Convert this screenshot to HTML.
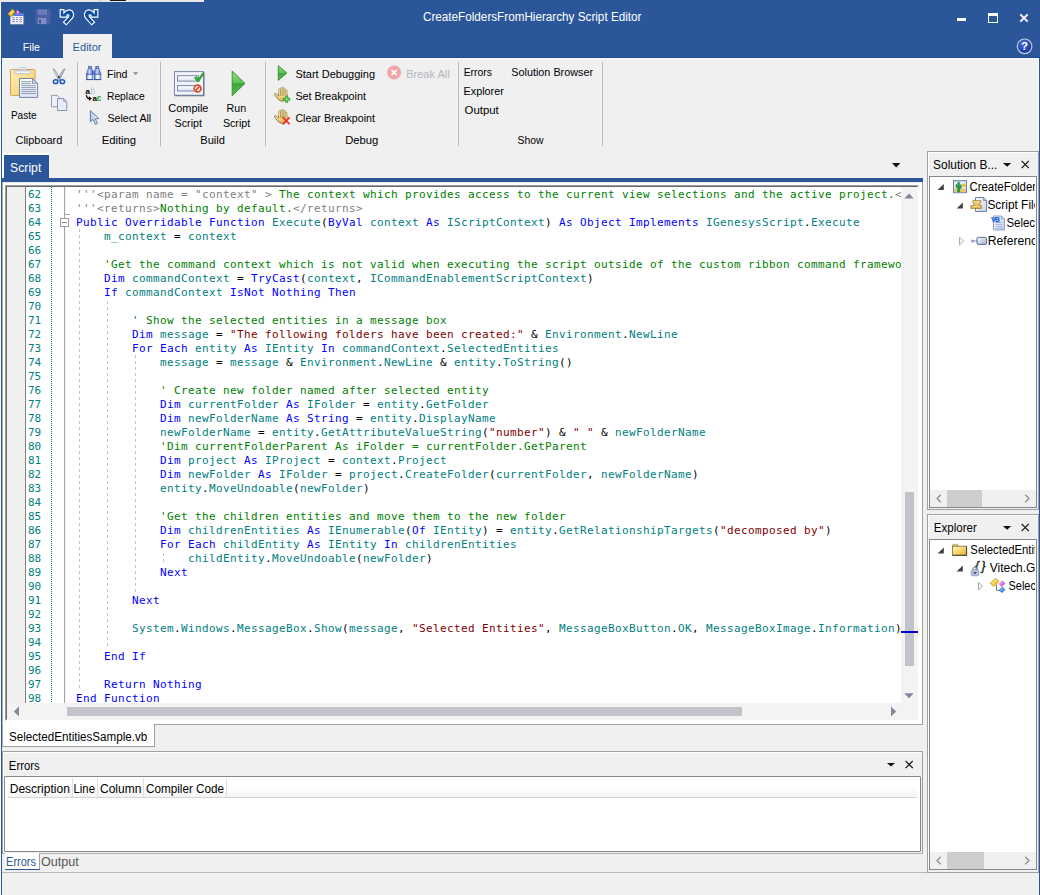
<!DOCTYPE html>
<html lang="en">
<head>
<meta charset="utf-8">
<title>CreateFoldersFromHierarchy Script Editor</title>
<style>
html,body{margin:0;padding:0}
body{width:1040px;height:895px;overflow:hidden;position:relative;background:#f0f0f0;font-family:"Liberation Sans",sans-serif;font-size:12px;color:#000;line-height:14px}
.a{position:absolute}
.t{position:absolute;white-space:nowrap;line-height:14px;height:14px}
svg{position:absolute;overflow:visible}
#topstrip{left:0;top:0;width:204px;height:2px;background:#e8e8e8}
#leftstrip{left:0;top:2px;width:1px;height:893px;background:#fafafa}
#bl{left:1px;top:2px;width:1px;height:893px;background:#2b579a}
#br{left:1039px;top:2px;width:1px;height:893px;background:#2b579a}
#title{left:1px;top:0;width:1039px;height:58px;background:#2b579a}
#ribbon{left:2px;top:58px;width:1036px;height:93px;background:#f0f0f0;border-right:1px solid #fbfaf6}
.sep{position:absolute;width:3px;margin-left:-1px;background:linear-gradient(to right,#f5f5f5 0,#f5f5f5 1px,#b6b6b6 1px,#b6b6b6 2px,#f5f5f5 2px,#f5f5f5 3px);top:62px;height:84px}
.tabsel{left:63px;top:34px;width:49px;height:24px;background:#f0f0f0}
/* code */
#code{left:66px;top:187px;width:835px;height:516px;overflow:hidden;background:#fff;box-sizing:border-box;padding-top:1px}
#code .ln,#nums .ln{height:14px;line-height:14px;white-space:pre;font-family:"DejaVu Sans Mono","Liberation Mono",monospace;font-size:11px;letter-spacing:0.377px}
#code .ln{padding-left:10px;color:#000}
#nums{left:26px;top:187px;width:38px;height:516px;overflow:hidden;background:#fff;color:#008080;box-sizing:border-box;padding-top:1px}
#nums .ln{padding-left:2px;letter-spacing:0}
.k{color:#00f}.i{color:#008080}.c{color:#008000}.s{color:#800000}.x{color:#808080}
.guide{position:absolute;width:1px;background-image:linear-gradient(to bottom,#c6c6c6 0,#c6c6c6 3px,transparent 3px,transparent 6px);background-size:1px 6px;background-repeat:repeat-y}
</style>
</head>
<body>
<div class="a" id="title"></div>
<div class="a" id="topstrip"></div>
<div class="a" id="leftstrip"></div>
<div class="a" id="ribbon"></div>
<div class="a" id="bl"></div>
<div class="a" id="br"></div>
<!-- ===== title bar / quick access ===== -->
<div class="a" id="topblk" style="left:110px;top:0;width:16px;height:1px;background:#1a1a1a"></div>
<div class="a" style="left:99px;top:0;width:1px;height:2px;background:#c8c8c8"></div>
<svg class="a" style="left:0;top:0" width="110" height="34" viewBox="0 0 110 34">
  <!-- app icon -->
  <rect x="10.4" y="15.6" width="13.2" height="8.6" fill="#f5f5f7"/>
  <path d="M10.4 24.4 H23.8 V16" fill="none" stroke="#7d879c" stroke-width="0.7"/>
  <rect x="14.2" y="13" width="9.6" height="2.9" fill="#3d70de"/>
  <rect x="14.4" y="13.9" width="9.2" height="0.9" fill="#6a97f0"/>
  <g fill="#7f8fbe"><rect x="12.1" y="17.1" width="2.9" height="1"/><rect x="16" y="17.1" width="2" height="1"/><rect x="19.1" y="17.1" width="2.9" height="1"/>
  <rect x="12.1" y="19.1" width="2.9" height="1"/><rect x="16" y="19.1" width="2" height="1"/><rect x="19.1" y="19.1" width="2.9" height="1"/>
  <rect x="12.1" y="21.1" width="2.9" height="1"/><rect x="16" y="21.1" width="2" height="1"/><rect x="19.1" y="21.1" width="2.9" height="1"/></g>
  <path d="M8 13.7 L12.6 9 L15.1 11.7 L11 17 Z" fill="#f3c01c" stroke="#d29a08" stroke-width="0.4"/>
  <path d="M9.7 13.4 L12.6 10.5 L13.6 11.6 L10.8 14.7 Z" fill="#f6e08e"/>
  <path d="M9.2 15.2 L11 17 L15.1 11.7 L14.6 11.2 L10.9 15.9 Z" fill="#c98f06"/>
  <path d="M16.1 11.4 L17.5 10.1 L19.8 12.7 L18.4 15.8 L17.2 14.2 Z" fill="#ee6de6"/>
  <path d="M16.6 11.5 L17.5 10.7 L19 12.5 L18 13.4 Z" fill="#ffa6fb"/>
  <path d="M18 13.6 L19.6 12.8 L18.4 15.6 L17.5 14.3 Z" fill="#c93cc0"/>
  <!-- save (disabled) -->
  <path d="M35.5 9 H50.5 V24.5 H37 L35.5 23 Z" fill="#4b5fa6"/>
  <rect x="38" y="9.6" width="9" height="5.2" fill="#7286be"/>
  <rect x="39" y="11" width="7" height="0.8" fill="#5a70b0"/><rect x="39" y="12.8" width="7" height="0.8" fill="#5a70b0"/>
  <rect x="38" y="18" width="8.4" height="6" fill="#7c90c4"/>
  <rect x="39.2" y="19.8" width="1.6" height="3.6" fill="#2f3f96"/>
  <!-- undo -->
  <path d="M60.2 9.6 H63.9 V13 L65.6 11.2 Q69.4 8.4 72.4 11.2 Q74.6 14.6 72.6 18 L66.3 24.8 L63.5 22.2 L68.7 16.6 Q69.4 15 68.2 14.8 L67 15 V17.1 H60.2 Z" fill="#0c4da2" stroke="#fff" stroke-width="1.15" stroke-linejoin="miter"/>
  <!-- redo -->
  <path d="M97.8 9.6 H94.1 V13 L92.4 11.2 Q88.6 8.4 85.6 11.2 Q83.4 14.6 85.4 18 L91.7 24.8 L94.5 22.2 L89.3 16.6 Q88.6 15 89.8 14.8 L91 15 V17.1 H97.8 Z" fill="#0c4da2" stroke="#fff" stroke-width="1.15" stroke-linejoin="miter"/>
</svg>
<!-- window buttons -->
<div class="a" style="left:957px;top:18px;width:9px;height:3px;background:#fff"></div>
<div class="a" style="left:988px;top:13px;width:8px;height:6px;border:1px solid #fff;border-top:3px solid #fff"></div>
<svg class="a" style="left:1019px;top:13px" width="10" height="10" viewBox="0 0 10 10"><path d="M1.3 1.3 L8.7 8.7 M8.7 1.3 L1.3 8.7" stroke="#fff" stroke-width="1.9"/></svg>
<!-- help -->
<svg class="a" style="left:1016px;top:38px" width="17" height="17" viewBox="0 0 17 17">
  <defs><radialGradient id="hg" cx="0.4" cy="0.3" r="0.8"><stop offset="0" stop-color="#4a6fd0"/><stop offset="1" stop-color="#0a2a9a"/></radialGradient></defs>
  <circle cx="8.6" cy="8.3" r="7.3" fill="url(#hg)" stroke="#c9cfdf" stroke-width="1.2"/>
  <text x="8.6" y="12.4" text-anchor="middle" font-family="Liberation Sans, sans-serif" font-weight="bold" font-size="11.5" fill="#fff">?</text>
</svg>
<!-- ribbon tabs -->
<div class="a" id="tline1" style="left:1px;top:57px;width:1039px;height:1px;background:#1e4b8f"></div>
<div class="a" style="left:2px;top:58px;width:61px;height:1px;background:#fafafa"></div>
<div class="a" style="left:112px;top:58px;width:926px;height:1px;background:#fafafa"></div>
<div class="a tabsel"></div>
<!-- ===== ribbon ===== -->
<div class="sep" style="left:77px"></div>
<div class="sep" style="left:160px"></div>
<div class="sep" style="left:265px"></div>
<div class="sep" style="left:458px"></div>
<div class="sep" style="left:602px"></div>
<svg class="a" style="left:0;top:58px" width="620" height="92" viewBox="0 58 620 92">
 <defs>
  <linearGradient id="gcb" x1="0" y1="0" x2="1" y2="1"><stop offset="0" stop-color="#fdf0bc"/><stop offset="0.55" stop-color="#f9dc86"/><stop offset="1" stop-color="#f0bd4e"/></linearGradient>
  <linearGradient id="gpp" x1="0" y1="0" x2="0" y2="1"><stop offset="0" stop-color="#ffffff"/><stop offset="1" stop-color="#e3e6f6"/></linearGradient>
  <linearGradient id="ggr" x1="0" y1="0" x2="0" y2="1"><stop offset="0" stop-color="#8fdc7c"/><stop offset="0.5" stop-color="#5fc254"/><stop offset="0.5" stop-color="#3fa83c"/><stop offset="1" stop-color="#58bc50"/></linearGradient>
  <linearGradient id="gbar" x1="0" y1="0" x2="0" y2="1"><stop offset="0" stop-color="#fdfdff"/><stop offset="1" stop-color="#dfe3f3"/></linearGradient>
  <linearGradient id="gbin" x1="0" y1="0" x2="1" y2="0"><stop offset="0" stop-color="#e8eefc"/><stop offset="0.5" stop-color="#9db4e8"/><stop offset="1" stop-color="#3b62c4"/></linearGradient>
  <linearGradient id="gbin2" x1="0" y1="0" x2="1" y2="0"><stop offset="0" stop-color="#4668c2"/><stop offset="0.45" stop-color="#c9d8f8"/><stop offset="1" stop-color="#3858b4"/></linearGradient>
  <linearGradient id="gbin3" x1="0" y1="0" x2="1" y2="0"><stop offset="0" stop-color="#5272c8"/><stop offset="0.4" stop-color="#ffffff"/><stop offset="0.7" stop-color="#e6ecfb"/><stop offset="1" stop-color="#7e98da"/></linearGradient>
  <linearGradient id="gcur" x1="0" y1="0" x2="1" y2="0"><stop offset="0" stop-color="#b4c8e8"/><stop offset="1" stop-color="#f2f6fd"/></linearGradient>
  <linearGradient id="ghand" x1="0" y1="0" x2="0" y2="1"><stop offset="0" stop-color="#fbf0b0"/><stop offset="1" stop-color="#d8a848"/></linearGradient>
 </defs>
 <!-- paste -->
 <rect x="10.5" y="69.5" width="24.5" height="26" rx="0.8" fill="url(#gcb)" stroke="#dba065" stroke-width="1"/>
 <rect x="19.5" y="67.4" width="6.2" height="4" rx="1.2" fill="#e9edf3" stroke="#b4bcc8" stroke-width="0.7"/>
 <rect x="21.2" y="69.2" width="2.6" height="1.4" fill="#e89a30"/>
 <rect x="14.3" y="70.2" width="16.4" height="3.5" rx="1.5" fill="#dfe4ec" stroke="#aab4c2" stroke-width="0.7"/>
 <rect x="15.6" y="71.9" width="13.8" height="0.9" fill="#fff"/>
 <path d="M19.5 78.5 H32.5 L37.6 83.4 V97.4 H19.5 Z" fill="url(#gpp)" stroke="#6f87a6" stroke-width="1"/>
 <path d="M32.5 78.5 V83.4 H37.6 Z" fill="#c9d6ee" stroke="#6f87a6" stroke-width="0.8"/>
 <g stroke="#7f95ad" stroke-width="0.9"><path d="M21.2 81.6H31M21.2 83.6H31M21.2 85.6H36M21.2 87.6H36M21.2 89.6H36M21.2 91.6H36M21.2 93.6H36"/></g>
 <!-- scissors -->
 <path d="M53 68.9 L54.4 69.2 L60.8 79.4 L58.8 80.4 Z" fill="#dfe4ec" stroke="#66748c" stroke-width="0.6"/>
 <path d="M65 68.9 L63.6 69.2 L57.2 79.4 L59.2 80.4 Z" fill="#c3cbd8" stroke="#66748c" stroke-width="0.6"/>
 <circle cx="59" cy="77.2" r="1.1" fill="#37445e"/>
 <ellipse cx="55.6" cy="81.7" rx="2.2" ry="1.9" fill="none" stroke="#1f58c4" stroke-width="1.5"/>
 <ellipse cx="62.4" cy="81.7" rx="2.2" ry="1.9" fill="none" stroke="#1f58c4" stroke-width="1.5"/>
 <!-- copy -->
 <path d="M51.5 95.4 H57.4 L59.6 97.6 V106.8 H51.5 Z" fill="#eef1fb" stroke="#8494ae" stroke-width="0.9"/>
 <path d="M57.5 98.6 H63.6 L66.8 101.6 V110.5 H57.5 Z" fill="#e9edf9" stroke="#7a8ca8" stroke-width="0.9"/>
 <path d="M63.6 98.6 V101.6 H66.8 Z" fill="#b9c8e6" stroke="#7a8ca8" stroke-width="0.6"/>
 <!-- binoculars -->
 <g>
  <rect x="88.7" y="66.2" width="2.8" height="2.2" fill="#4a6cc6" stroke="#3554ae" stroke-width="0.5"/>
  <rect x="95.8" y="66.2" width="2.8" height="2.2" fill="#4a6cc6" stroke="#3554ae" stroke-width="0.5"/>
  <rect x="89.6" y="66.9" width="1" height="0.9" fill="#e8eefc"/><rect x="96.7" y="66.9" width="1" height="0.9" fill="#e8eefc"/>
  <path d="M88.3 68.4 H91.9 L93.2 74.4 H86.4 Z" fill="url(#gbin2)" stroke="#3554ae" stroke-width="0.6"/>
  <path d="M95.4 68.4 H99 L100.9 74.4 H94.1 Z" fill="url(#gbin2)" stroke="#3554ae" stroke-width="0.6"/>
  <rect x="92.6" y="70.6" width="2.2" height="3.2" fill="#3a5ab4"/>
  <rect x="93.2" y="71.4" width="1" height="1" fill="#c8d6f6"/>
  <rect x="86.4" y="74.4" width="6.6" height="5.2" fill="url(#gbin3)" stroke="#3554ae" stroke-width="0.6"/>
  <rect x="94.3" y="74.4" width="6.6" height="5.2" fill="url(#gbin3)" stroke="#3554ae" stroke-width="0.6"/>
  <rect x="86.1" y="79.2" width="7.2" height="0.9" fill="#2d4aa2"/><rect x="94" y="79.2" width="7.2" height="0.9" fill="#2d4aa2"/>
 </g>
 <!-- find dropdown arrow -->
 <path d="M133 72.2 H138.4 L135.7 75.1 Z" fill="#8a8a8a"/>
 <!-- replace icon -->
 <text x="85.5" y="93.5" font-family="Liberation Sans, sans-serif" font-weight="bold" font-size="8" fill="#000">a</text>
 <text x="90.5" y="93.5" font-family="Liberation Sans, sans-serif" font-size="8.4" fill="#b9c4d3">b</text>
 <path d="M86.5 95.2 Q86.7 98.7 90 98.6" fill="none" stroke="#000" stroke-width="1.3"/>
 <path d="M88.9 96.3 L91.7 98.6 L88.9 100.9 Z" fill="#000"/>
 <text x="92.6" y="101.1" font-family="Liberation Sans, sans-serif" font-weight="bold" font-size="8" fill="#000">a</text>
 <text x="96.7" y="101.1" font-family="Liberation Sans, sans-serif" font-weight="bold" font-size="8.2" fill="#18a018">c</text>
 <!-- cursor -->
 <path d="M90.4 110.6 V121.8 L93.2 119.4 L95.4 124.4 L97.4 123.5 L95.2 118.8 L98.8 118.6 Z" fill="url(#gcur)" stroke="#5a70a0" stroke-width="0.9" stroke-linejoin="round"/>
 <!-- compile -->
 <rect x="174.5" y="71.6" width="29" height="23.6" fill="#f2f4fb" stroke="#7a88a8" stroke-width="1"/>
 <path d="M175 95.8 H204 V72.5" fill="none" stroke="#5a6884" stroke-width="0.9"/>
 <rect x="177.5" y="75.7" width="21" height="5.4" fill="url(#gbar)" stroke="#6f7f9f" stroke-width="0.9"/>
 <rect x="177.5" y="85.6" width="21" height="5.4" fill="url(#gbar)" stroke="#6f7f9f" stroke-width="0.9"/>
 <path d="M194.2 77.6 L196.6 76.6 L198.4 78.8 L202.6 72.8 L204 73.6 L199 81.8 L197.4 81.8 Z" fill="#2faa2f" stroke="#1f8a1f" stroke-width="0.4"/>
 <circle cx="197.6" cy="88.5" r="3.4" fill="#fff" stroke="#e04a28" stroke-width="1.8"/>
 <path d="M195.6 90.6 L199.6 86.4" stroke="#e04a28" stroke-width="1.6"/>
 <!-- run -->
 <path d="M232.2 71 L245 83.4 L232.2 95.8 Z" fill="url(#ggr)" stroke="#2f8d2f" stroke-width="0.9" stroke-linejoin="round"/>
 <!-- start debugging -->
 <path d="M278.3 65.8 L286.8 73 L278.3 80.4 Z" fill="url(#ggr)" stroke="#2f8d2f" stroke-width="0.9" stroke-linejoin="round"/>
 <!-- hands -->
 <g>
  <path d="M278.6 94 H287 V97.6 Q286.6 100.8 283.6 101.1 H280.6 Q278.6 100.2 277 98 L274.5 94.8 Q274.1 93.3 275.7 93.3 L278.6 95.8 Z" fill="url(#ghand)" stroke="#7e6230" stroke-width="0.7" stroke-linejoin="round"/>
  <g fill="#f8e9a2" stroke="#86692f" stroke-width="0.55"><rect x="278.7" y="88.6" width="2" height="7.4" rx="1"/><rect x="280.9" y="87.3" width="2" height="8.7" rx="1"/><rect x="283.1" y="87.8" width="2" height="8.2" rx="1"/><rect x="285.2" y="89.8" width="1.8" height="7" rx="0.9"/></g>
  <path d="M279 95.6 H286.8 V97.4 H279 Z" fill="#f1d67e"/>
 </g>
 <path d="M283.4 98 H285.6 V95.9 H287.8 V98 H289.9 V100.3 H287.8 V102.5 H285.6 V100.3 H283.4 Z" fill="#3cb43c" stroke="#1f8c1f" stroke-width="0.5"/><path d="M286.2 96.8 H287.2 V98.7 H289 V99.6 H287.2 V101.6 H286.2 V99.6 H284.3 V98.7 H286.2 Z" fill="#8fe08a"/>
 <g transform="translate(0,22.2)">
  <path d="M278.6 94 H287 V97.6 Q286.6 100.8 283.6 101.1 H280.6 Q278.6 100.2 277 98 L274.5 94.8 Q274.1 93.3 275.7 93.3 L278.6 95.8 Z" fill="url(#ghand)" stroke="#7e6230" stroke-width="0.7" stroke-linejoin="round"/>
  <g fill="#f8e9a2" stroke="#86692f" stroke-width="0.55"><rect x="278.7" y="88.6" width="2" height="7.4" rx="1"/><rect x="280.9" y="87.3" width="2" height="8.7" rx="1"/><rect x="283.1" y="87.8" width="2" height="8.2" rx="1"/><rect x="285.2" y="89.8" width="1.8" height="7" rx="0.9"/></g>
  <path d="M279 95.6 H286.8 V97.4 H279 Z" fill="#f1d67e"/>
  <path d="M282.6 95 L289.6 102 M289.6 95.2 L282.8 102.2" stroke="#e8352a" stroke-width="1.8"/>
 </g>
 <!-- break all -->
 <circle cx="394.1" cy="72.4" r="7.1" fill="#f0a2a6" stroke="#e9d5d7" stroke-width="1.2"/>
 <path d="M391.6 69.9 L396.6 74.9 M396.6 69.9 L391.6 74.9" stroke="#fff" stroke-width="1.7"/>
</svg>
<!-- ===== document area ===== -->
<div class="a" style="left:2px;top:153px;width:47px;height:25px;background:#fff"></div>
<div class="a" style="left:4px;top:155px;width:45px;height:23px;background:#2b579a"></div>
<div class="a" style="left:2px;top:178px;width:921px;height:4px;background:#2b579a"></div>
<svg class="a" style="left:892px;top:163px" width="9" height="5" viewBox="0 0 9 5"><path d="M0 0 H8.4 L4.2 4.4 Z" fill="#111"/></svg>
<!-- white frame + borders -->
<div class="a" style="left:2px;top:182px;width:920px;height:542px;background:#fff"></div>
<div class="a" style="left:922px;top:182px;width:1px;height:543px;background:#a0a0a0"></div>
<div class="a" style="left:2px;top:724px;width:921px;height:1px;background:#a0a0a0"></div>
<div class="a" style="left:2px;top:182px;width:920px;height:1px;background:#ece9e2"></div>
<div class="a" id="docleft" style="left:2px;top:182px;width:1px;height:565px;background:#acaaa6"></div>
<!-- sunken editor -->
<div class="a" style="left:5px;top:185px;width:914px;height:536px;background:#f3f3f3;box-sizing:border-box;border-left:1px solid #a0a0a0;border-top:1px solid #a0a0a0;border-right:1px solid #fff;border-bottom:1px solid #fff"></div>
<div class="a" style="left:6px;top:186px;width:912px;height:534px;box-sizing:border-box;border-left:1px solid #696969;border-top:1px solid #696969;border-right:1px solid #f3f3f3;border-bottom:1px solid #f3f3f3"></div>
<!-- selection margin -->
<div class="a" style="left:7px;top:187px;width:18px;height:516px;background:#f0f0f0"></div>
<div class="a" style="left:25px;top:187px;width:1px;height:516px;background:#808080"></div>
<div class="a" id="nums">
<div class="ln">62</div>
<div class="ln">63</div>
<div class="ln">64</div>
<div class="ln">65</div>
<div class="ln">66</div>
<div class="ln">67</div>
<div class="ln">68</div>
<div class="ln">69</div>
<div class="ln">70</div>
<div class="ln">71</div>
<div class="ln">72</div>
<div class="ln">73</div>
<div class="ln">74</div>
<div class="ln">75</div>
<div class="ln">76</div>
<div class="ln">77</div>
<div class="ln">78</div>
<div class="ln">79</div>
<div class="ln">80</div>
<div class="ln">81</div>
<div class="ln">82</div>
<div class="ln">83</div>
<div class="ln">84</div>
<div class="ln">85</div>
<div class="ln">86</div>
<div class="ln">87</div>
<div class="ln">88</div>
<div class="ln">89</div>
<div class="ln">90</div>
<div class="ln">91</div>
<div class="ln">92</div>
<div class="ln">93</div>
<div class="ln">94</div>
<div class="ln">95</div>
<div class="ln">96</div>
<div class="ln">97</div>
<div class="ln">98</div>
</div>
<div class="a" id="code">
<div class="ln"><span class="x">'''</span><span class="x">&lt;param name = "context" &gt;</span><span class="c"> The context which provides access to the current view selections and the active project.</span><span class="x">&lt;</span></div>
<div class="ln"><span class="x">'''</span><span class="x">&lt;returns&gt;</span><span class="c">Nothing by default.</span><span class="x">&lt;/returns&gt;</span></div>
<div class="ln"><span class="k">Public</span> <span class="k">Overridable</span> <span class="k">Function</span> <span class="i">Execute</span>(<span class="k">ByVal</span> <span class="i">context</span> <span class="k">As</span> <span class="i">IScriptContext</span>) <span class="k">As</span> <span class="k">Object</span> <span class="k">Implements</span> <span class="i">IGenesysScript</span>.<span class="i">Execute</span></div>
<div class="ln">    <span class="i">m_context</span> = <span class="i">context</span></div>
<div class="ln"></div>
<div class="ln">    <span class="c">'Get the command context which is not valid when executing the script outside of the custom ribbon command framewo</span></div>
<div class="ln">    <span class="k">Dim</span> <span class="i">commandContext</span> = <span class="k">TryCast</span>(<span class="i">context</span>, <span class="i">ICommandEnablementScriptContext</span>)</div>
<div class="ln">    <span class="k">If</span> <span class="i">commandContext</span> <span class="k">IsNot</span> <span class="k">Nothing</span> <span class="k">Then</span></div>
<div class="ln"></div>
<div class="ln">        <span class="c">' Show the selected entities in a message box</span></div>
<div class="ln">        <span class="k">Dim</span> <span class="i">message</span> = <span class="s">"The following folders have been created:"</span> &amp; <span class="i">Environment</span>.<span class="i">NewLine</span></div>
<div class="ln">        <span class="k">For</span> <span class="k">Each</span> <span class="i">entity</span> <span class="k">As</span> <span class="i">IEntity</span> <span class="k">In</span> <span class="i">commandContext</span>.<span class="i">SelectedEntities</span></div>
<div class="ln">            <span class="i">message</span> = <span class="i">message</span> &amp; <span class="i">Environment</span>.<span class="i">NewLine</span> &amp; <span class="i">entity</span>.<span class="i">ToString</span>()</div>
<div class="ln"></div>
<div class="ln">            <span class="c">' Create new folder named after selected entity</span></div>
<div class="ln">            <span class="k">Dim</span> <span class="i">currentFolder</span> <span class="k">As</span> <span class="i">IFolder</span> = <span class="i">entity</span>.<span class="i">GetFolder</span></div>
<div class="ln">            <span class="k">Dim</span> <span class="i">newFolderName</span> <span class="k">As</span> <span class="k">String</span> = <span class="i">entity</span>.<span class="i">DisplayName</span></div>
<div class="ln">            <span class="i">newFolderName</span> = <span class="i">entity</span>.<span class="i">GetAttributeValueString</span>(<span class="s">"number"</span>) &amp; <span class="s">" "</span> &amp; <span class="i">newFolderName</span></div>
<div class="ln">            <span class="c">'Dim currentFolderParent As iFolder = currentFolder.GetParent</span></div>
<div class="ln">            <span class="k">Dim</span> <span class="i">project</span> <span class="k">As</span> <span class="i">IProject</span> = <span class="i">context</span>.<span class="i">Project</span></div>
<div class="ln">            <span class="k">Dim</span> <span class="i">newFolder</span> <span class="k">As</span> <span class="i">IFolder</span> = <span class="i">project</span>.<span class="i">CreateFolder</span>(<span class="i">currentFolder</span>, <span class="i">newFolderName</span>)</div>
<div class="ln">            <span class="i">entity</span>.<span class="i">MoveUndoable</span>(<span class="i">newFolder</span>)</div>
<div class="ln"></div>
<div class="ln">            <span class="c">'Get the children entities and move them to the new folder</span></div>
<div class="ln">            <span class="k">Dim</span> <span class="i">childrenEntities</span> <span class="k">As</span> <span class="i">IEnumerable</span>(<span class="k">Of</span> <span class="i">IEntity</span>) = <span class="i">entity</span>.<span class="i">GetRelationshipTargets</span>(<span class="s">"decomposed by"</span>)</div>
<div class="ln">            <span class="k">For</span> <span class="k">Each</span> <span class="i">childEntity</span> <span class="k">As</span> <span class="i">IEntity</span> <span class="k">In</span> <span class="i">childrenEntities</span></div>
<div class="ln">                <span class="i">childEntity</span>.<span class="i">MoveUndoable</span>(<span class="i">newFolder</span>)</div>
<div class="ln">            <span class="k">Next</span></div>
<div class="ln"></div>
<div class="ln">        <span class="k">Next</span></div>
<div class="ln"></div>
<div class="ln">        <span class="i">System</span>.<span class="i">Windows</span>.<span class="i">MessageBox</span>.<span class="i">Show</span>(<span class="i">message</span>, <span class="s">"Selected Entities"</span>, <span class="i">MessageBoxButton</span>.<span class="i">OK</span>, <span class="i">MessageBoxImage</span>.<span class="i">Information</span>)</div>
<div class="ln"></div>
<div class="ln">    <span class="k">End</span> <span class="k">If</span></div>
<div class="ln"></div>
<div class="ln">    <span class="k">Return</span> <span class="k">Nothing</span></div>
<div class="ln"><span class="k">End</span> <span class="k">Function</span></div>
</div>
<!-- dotted line / fold margin -->
<div class="a" style="left:51px;top:187px;width:1px;height:516px;background:repeating-linear-gradient(to bottom,#008080 0,#008080 1px,transparent 1px,transparent 2px)"></div>
<div class="a" style="left:64px;top:187px;width:1px;height:516px;background:#a5a5a5"></div>
<!-- fold box line 64 -->
<div class="a" style="left:64px;top:214px;width:6px;height:1px;background:#a5a5a5"></div>
<div class="a" style="left:60px;top:218px;width:7px;height:7px;background:#fff;border:1px solid #a0a0a0;box-sizing:content-box"></div>
<div class="a" style="left:62px;top:222px;width:5px;height:1px;background:#8a8a8a"></div>
<!-- indent guides -->
<div class="guide" style="left:79px;top:229px;height:462px;background-position:0 0px"></div>
<div class="guide" style="left:107px;top:299px;height:350px;background-position:0 2px"></div>
<div class="guide" style="left:135px;top:355px;height:238px;background-position:0 0px"></div>
<div class="guide" style="left:163px;top:551px;height:14px;background-position:0 2px"></div>
<!-- vertical scrollbar -->
<div class="a" style="left:901px;top:187px;width:17px;height:516px;background:#f3f3f3"></div>
<div class="a" style="left:905px;top:492px;width:9px;height:174px;background:#c2c3c9"></div>
<div class="a" style="left:901px;top:631px;width:17px;height:2px;background:#0000c8"></div>
<svg class="a" style="left:904px;top:193px" width="10" height="6" viewBox="0 0 10 6"><path d="M0.3 5.4 L5 0.5 L9.7 5.4 Z" fill="#868999"/></svg>
<svg class="a" style="left:904px;top:693px" width="10" height="6" viewBox="0 0 10 6"><path d="M0.3 0.3 L5 5.3 L9.7 0.3 Z" fill="#868999"/></svg>
<!-- horizontal scrollbar -->
<div class="a" style="left:7px;top:703px;width:911px;height:17px;background:#f3f3f3"></div>
<div class="a" style="left:67px;top:707px;width:675px;height:9px;background:#c2c3c9"></div>
<svg class="a" style="left:13px;top:706px" width="7" height="11" viewBox="0 0 7 11"><path d="M6 0.6 L0.8 5.5 L6 10.4 Z" fill="#868999"/></svg>
<svg class="a" style="left:890px;top:706px" width="7" height="11" viewBox="0 0 7 11"><path d="M1 0.6 L6.2 5.5 L1 10.4 Z" fill="#868999"/></svg>
<!-- bottom document tab -->
<div class="a" style="left:3px;top:724px;width:151px;height:22px;background:#fff"></div>
<div class="a" style="left:154px;top:724px;width:1px;height:23px;background:#a0a0a0"></div>
<div class="a" style="left:2px;top:746px;width:153px;height:1px;background:#a0a0a0"></div>
<!-- ===== right panels ===== -->
<!-- Solution Browser panel -->
<div class="a" style="left:927px;top:151px;width:112px;height:359px;box-sizing:border-box;border:1px solid #a0a0a0;background:#f0f0f0"></div>
<div class="a" style="left:928px;top:152px;width:110px;height:1px;background:#fff"></div>
<div class="a" style="left:928px;top:152px;width:1px;height:356px;background:#fff"></div>
<div class="a" style="left:929px;top:176px;width:108px;height:332px;box-sizing:border-box;border:1px solid #828790;background:#fff"></div>
<svg class="a" style="left:1003px;top:163px" width="9" height="5" viewBox="0 0 9 5"><path d="M0 0 H8.2 L4.1 3.7 Z" fill="#111"/></svg>
<svg class="a" style="left:1021px;top:160px" width="9" height="9" viewBox="0 0 9 9"><path d="M0.6 0.9 L7.8 8.1 M7.8 0.9 L0.6 8.1" stroke="#111" stroke-width="1.25"/></svg>
<!-- h scrollbar -->
<div class="a" style="left:930px;top:490px;width:106px;height:17px;background:#f0f0f0"></div>
<div class="a" style="left:947px;top:490px;width:35px;height:17px;background:#cdcdcd"></div>
<svg class="a" style="left:936px;top:494px" width="6" height="9" viewBox="0 0 6 9"><path d="M4.8 0.8 L1 4.5 L4.8 8.2" fill="none" stroke="#8a8a8a" stroke-width="1.2"/></svg>
<svg class="a" style="left:1024px;top:494px" width="6" height="9" viewBox="0 0 6 9"><path d="M1.2 0.8 L5 4.5 L1.2 8.2" fill="none" stroke="#8a8a8a" stroke-width="1.2"/></svg>
<!-- Explorer panel -->
<div class="a" style="left:927px;top:514px;width:112px;height:359px;box-sizing:border-box;border:1px solid #a0a0a0;background:#f0f0f0"></div>
<div class="a" style="left:928px;top:515px;width:110px;height:1px;background:#fff"></div>
<div class="a" style="left:928px;top:515px;width:1px;height:356px;background:#fff"></div>
<div class="a" style="left:929px;top:539px;width:108px;height:331px;box-sizing:border-box;border:1px solid #828790;background:#fff"></div>
<svg class="a" style="left:1003px;top:526px" width="9" height="5" viewBox="0 0 9 5"><path d="M0 0 H8.2 L4.1 3.7 Z" fill="#111"/></svg>
<svg class="a" style="left:1021px;top:523px" width="9" height="9" viewBox="0 0 9 9"><path d="M0.6 0.9 L7.8 8.1 M7.8 0.9 L0.6 8.1" stroke="#111" stroke-width="1.25"/></svg>
<div class="a" style="left:930px;top:852px;width:106px;height:17px;background:#f0f0f0"></div>
<div class="a" style="left:947px;top:852px;width:37px;height:17px;background:#cdcdcd"></div>
<svg class="a" style="left:936px;top:856px" width="6" height="9" viewBox="0 0 6 9"><path d="M4.8 0.8 L1 4.5 L4.8 8.2" fill="none" stroke="#8a8a8a" stroke-width="1.2"/></svg>
<svg class="a" style="left:1024px;top:856px" width="6" height="9" viewBox="0 0 6 9"><path d="M1.2 0.8 L5 4.5 L1.2 8.2" fill="none" stroke="#8a8a8a" stroke-width="1.2"/></svg>
<!-- tree expanders -->
<svg class="a" style="left:0;top:0" width="1040" height="895" viewBox="0 0 1040 895">
 <g fill="#404040">
  <path d="M943.8 184 V190 H937.6 Z"/>
  <path d="M962.8 202.4 V208.4 H956.6 Z"/>
  <path d="M943.8 547.4 V553.4 H937.6 Z"/>
  <path d="M962.8 565.6 V571.6 H956.6 Z"/>
 </g>
 <g fill="#fff" stroke="#a6a6a6" stroke-width="1">
  <path d="M959.5 237.2 L963.6 241 L959.5 244.8 Z"/>
  <path d="M978.5 582.4 L982.6 586.2 L978.5 590 Z"/>
 </g>
</svg>
<!-- tree icons -->
<svg class="a" style="left:0;top:0" width="1040" height="895" viewBox="0 0 1040 895">
 <defs>
  <linearGradient id="gfold" x1="0" y1="0" x2="1" y2="1"><stop offset="0" stop-color="#fff6c8"/><stop offset="0.5" stop-color="#f8d870"/><stop offset="1" stop-color="#e2a82a"/></linearGradient>
  <linearGradient id="gpg" x1="0" y1="0" x2="1" y2="1"><stop offset="0" stop-color="#ffffff"/><stop offset="1" stop-color="#c8d2ec"/></linearGradient>
  <linearGradient id="gref" x1="0" y1="0" x2="1" y2="1"><stop offset="0" stop-color="#ffffff"/><stop offset="1" stop-color="#9fb0d4"/></linearGradient>
  <linearGradient id="ggold" x1="0" y1="0" x2="0" y2="1"><stop offset="0" stop-color="#f8e49a"/><stop offset="1" stop-color="#d8a030"/></linearGradient>
 </defs>
 <!-- project icon -->
 <rect x="953.5" y="180.7" width="13" height="12" fill="#e3ebf6" stroke="#5f7fb4" stroke-width="1"/>
 <rect x="954" y="188.6" width="12" height="3.6" fill="#e6c878"/>
 <path d="M957.6 192 V187.6 H956 V184.4 H957 V186.2 H957.8 V182.4 Q958.6 181.4 959.6 182.4 V187 H960.4 V184.8 H961.4 V188.2 H959.8 V192 Z" fill="#22993a" stroke="#147a28" stroke-width="0.4"/>
 <circle cx="964" cy="185.2" r="1.5" fill="#f2c820" stroke="#d8a010" stroke-width="0.4"/>
 <!-- script files icon -->
 <path d="M975.5 197.6 H983.6 L986.6 200.6 V211.4 H975.5 Z" fill="url(#gpg)" stroke="#5a6e9a" stroke-width="0.9"/>
 <path d="M983.6 197.6 V200.6 H986.6" fill="none" stroke="#5a6e9a" stroke-width="0.7"/>
 <path d="M973 200.6 H981 Q981.6 202 980.4 203 H979.4 V205.4 H981.4 V208.4 H970.8 V205.6 H974 V203 H973 Q972 201.8 973 200.6 Z" fill="url(#ggold)" stroke="#9a7420" stroke-width="0.7"/>
 <rect x="971.6" y="206.4" width="9" height="0.8" fill="#fff3c0"/>
 <!-- vb file icon -->
 <path d="M993.5 216 H1001.4 L1004.4 219 V230 H993.5 Z" fill="url(#gpg)" stroke="#7f94c4" stroke-width="0.9"/>
 <path d="M1001.4 216 V219 H1004.4" fill="none" stroke="#7f94c4" stroke-width="0.7"/>
 <g stroke="#9fb0d8" stroke-width="0.9"><path d="M995.4 222.6H1002.6M995.4 224.6H1002.6M995.4 226.6H1002.6M995.4 228.4H1002.6"/></g>
 <text x="991.2" y="221.6" font-family="Liberation Sans, sans-serif" font-weight="bold" font-size="6.6" fill="#1663d6" stroke="#1663d6" stroke-width="0.25" letter-spacing="-0.5">VB</text>
 <!-- references icon -->
 <rect x="977" y="237.4" width="9.6" height="7" rx="1.2" fill="url(#gref)" stroke="#4a5a84" stroke-width="0.9"/>
 <rect x="971.2" y="239.8" width="2.6" height="2.6" fill="#8a9cc0"/>
 <path d="M973.8 241 H977" stroke="#6a7ca4" stroke-width="0.9"/>
 <!-- folder -->
 <path d="M952.6 546 V544.8 Q952.8 544.3 953.4 544.3 H957.4 Q958 544.4 958.2 545.2 L958.4 546 Z" fill="#f3dc8c" stroke="#a89050" stroke-width="0.6"/>
 <rect x="952.5" y="546.2" width="14" height="9" fill="url(#gfold)" stroke="#7a6a3a" stroke-width="0.8"/>
 <path d="M952.5 555.4 H966.6 V546.4" fill="none" stroke="#3c3828" stroke-width="0.9"/>
 <!-- namespace icon -->
 <text x="975" y="569.8" font-family="Liberation Sans, sans-serif" font-style="italic" font-size="12" fill="#111" stroke="#111" stroke-width="0.35">{</text><text x="981.6" y="569.8" font-family="Liberation Sans, sans-serif" font-style="italic" font-size="12" fill="#111" stroke="#111" stroke-width="0.35">}</text>
 <path d="M972.8 570 V568.6 Q974.9 566.2 977 568.6 V570" fill="none" stroke="#8e9ebc" stroke-width="1.1"/>
 <rect x="971.3" y="569.8" width="7.4" height="6" rx="1" fill="#b6c4de" stroke="#7e90b4" stroke-width="0.7"/>
 <path d="M973.2 572.2 H976.8 L975 574.2 Z" fill="#2a3450"/>
 <!-- class icon -->
 <path d="M996.5 584.5 V590.4 H1000" fill="none" stroke="#5f7ca8" stroke-width="1"/>
 <path d="M990.2 583.2 L995.6 578.2 L999 581.6 L993.6 586.8 Z" fill="#f0c434" stroke="#c89a18" stroke-width="0.6"/>
 <path d="M991.8 583.1 L995.5 579.7 L996.6 580.8 L993 584.3 Z" fill="#f9e38c"/>
 <path d="M999.2 584 L1002.4 581 L1005 583.4 L1001.8 586.6 Z" fill="#e45ee0" stroke="#c040bc" stroke-width="0.5"/>
 <path d="M1000.2 584 L1002.3 582 L1003 582.7 L1001 584.8 Z" fill="#f6b2f2"/>
 <path d="M999.2 590 L1002.4 587 L1005 589.6 L1001.8 592.8 Z" fill="#3c86e4" stroke="#2a62b8" stroke-width="0.5"/>
 <path d="M1000.2 590 L1002.3 588 L1003 588.7 L1001 590.8 Z" fill="#a8ccf6"/>
</svg>
<!-- ===== errors panel ===== -->
<div class="a" style="left:2px;top:751px;width:921px;height:103px;box-sizing:border-box;border:1px solid #a0a0a0;border-bottom-color:#b4b4b4;background:#f0f0f0"></div>
<div class="a" style="left:3px;top:752px;width:919px;height:1px;background:#fff"></div>
<div class="a" style="left:3px;top:752px;width:1px;height:100px;background:#fff"></div>
<div class="a" style="left:4px;top:776px;width:917px;height:76px;box-sizing:border-box;border:1px solid #828790;border-radius:1px;background:#fff"></div>
<div class="a" style="left:8px;top:778px;width:909px;height:19px;background:linear-gradient(to bottom,#fff 0,#fff 45%,#f3f4f6 100%)"></div>
<div class="a" style="left:8px;top:797px;width:909px;height:1px;background:#d5d5d5"></div>
<div class="a" style="left:72px;top:778px;width:1px;height:19px;background:#dedfe1"></div>
<div class="a" style="left:97px;top:778px;width:1px;height:19px;background:#dedfe1"></div>
<div class="a" style="left:143px;top:778px;width:1px;height:19px;background:#dedfe1"></div>
<div class="a" style="left:226px;top:778px;width:1px;height:19px;background:#dedfe1"></div>
<svg class="a" style="left:887px;top:763px" width="9" height="5" viewBox="0 0 9 5"><path d="M0 0 H8 L4 3.6 Z" fill="#111"/></svg>
<svg class="a" style="left:905px;top:760px" width="9" height="9" viewBox="0 0 9 9"><path d="M0.6 0.9 L7.8 8.1 M7.8 0.9 L0.6 8.1" stroke="#111" stroke-width="1.25"/></svg>
<!-- bottom tabs -->
<div class="a" style="left:5px;top:853px;width:35px;height:17px;background:#fff"></div>
<div class="a" style="left:39px;top:853px;width:1px;height:17px;background:#a0a0a0"></div>
<div class="a" style="left:5px;top:869px;width:35px;height:1px;background:#2b579a"></div>
<!-- status line -->
<div class="a" style="left:2px;top:872px;width:925px;height:1px;background:#b9b9b9"></div>
<!-- ===== texts ===== -->
<div class="t" style="left:0;top:10px;font-size:12.5px;transform:translateX(423.00px) scaleX(0.9359);transform-origin:0 0;color:#ffffff;">CreateFoldersFromHierarchy Script Editor</div>
<div class="t" style="left:0;top:40px;font-size:11px;transform:translateX(22.84px) scaleX(0.9647);transform-origin:0 0;color:#ffffff;">File</div>
<div class="t" style="left:0;top:40px;font-size:11px;transform:translateX(72.59px) scaleX(1.0071);transform-origin:0 0;color:#2b579a;">Editor</div>
<div class="t" style="left:0;top:108px;font-size:11px;transform:translateX(10.89px) scaleX(0.9111);transform-origin:0 0;">Paste</div>
<div class="t" style="left:0;top:133px;font-size:11px;transform:translateX(15.50px) scaleX(0.9936);transform-origin:0 0;">Clipboard</div>
<div class="t" style="left:0;top:67px;font-size:11px;transform:translateX(106.94px) scaleX(0.9600);transform-origin:0 0;">Find</div>
<div class="t" style="left:0;top:89px;font-size:11px;transform:translateX(106.96px) scaleX(0.9359);transform-origin:0 0;">Replace</div>
<div class="t" style="left:0;top:111px;font-size:11px;transform:translateX(107.40px) scaleX(0.9689);transform-origin:0 0;">Select All</div>
<div class="t" style="left:0;top:133px;font-size:11px;transform:translateX(101.67px) scaleX(1.0250);transform-origin:0 0;">Editing</div>
<div class="t" style="left:0;top:101px;font-size:11px;transform:translateX(168.30px) scaleX(0.9950);transform-origin:0 0;">Compile</div>
<div class="t" style="left:0;top:116px;font-size:11px;transform:translateX(174.60px) scaleX(0.9714);transform-origin:0 0;">Script</div>
<div class="t" style="left:0;top:101px;font-size:11px;transform:translateX(226.53px) scaleX(0.9684);transform-origin:0 0;">Run</div>
<div class="t" style="left:0;top:116px;font-size:11px;transform:translateX(222.90px) scaleX(0.9714);transform-origin:0 0;">Script</div>
<div class="t" style="left:0;top:133px;font-size:11px;transform:translateX(200.29px) scaleX(1.0087);transform-origin:0 0;">Build</div>
<div class="t" style="left:0;top:67px;font-size:11px;transform:translateX(295.40px) scaleX(1.0013);transform-origin:0 0;">Start Debugging</div>
<div class="t" style="left:0;top:67px;font-size:11px;transform:translateX(406.20px) scaleX(1.0024);transform-origin:0 0;color:#b4b6be;">Break All</div>
<div class="t" style="left:0;top:89px;font-size:11px;transform:translateX(295.40px) scaleX(0.9778);transform-origin:0 0;">Set Breakpoint</div>
<div class="t" style="left:0;top:111px;font-size:11px;transform:translateX(295.40px) scaleX(0.9707);transform-origin:0 0;">Clear Breakpoint</div>
<div class="t" style="left:0;top:133px;font-size:11px;transform:translateX(345.18px) scaleX(1.0226);transform-origin:0 0;">Debug</div>
<div class="t" style="left:0;top:65px;font-size:11px;transform:translateX(463.65px) scaleX(0.9483);transform-origin:0 0;">Errors</div>
<div class="t" style="left:0;top:65px;font-size:11px;transform:translateX(511.30px) scaleX(0.9831);transform-origin:0 0;">Solution Browser</div>
<div class="t" style="left:0;top:84px;font-size:11px;transform:translateX(463.62px) scaleX(0.9800);transform-origin:0 0;">Explorer</div>
<div class="t" style="left:0;top:103px;font-size:11px;transform:translateX(464.60px) scaleX(1.0333);transform-origin:0 0;">Output</div>
<div class="t" style="left:0;top:133px;font-size:11px;transform:translateX(517.50px) scaleX(0.9464);transform-origin:0 0;">Show</div>
<div class="t" style="left:0;top:161px;font-size:12px;transform:translateX(10.08px) scaleX(1.0167);transform-origin:0 0;color:#ffffff;">Script</div>
<div class="t" style="left:0;top:730px;font-size:12px;transform:translateX(9.03px) scaleX(0.9683);transform-origin:0 0;">SelectedEntitiesSample.vb</div>
<div class="t" style="left:0;top:759px;font-size:12px;transform:translateX(8.86px) scaleX(0.9406);transform-origin:0 0;">Errors</div>
<div class="t" style="left:0;top:782px;font-size:12px;transform:translateX(9.70px) scaleX(1.0017);transform-origin:0 0;">Description</div>
<div class="t" style="left:0;top:782px;font-size:12px;transform:translateX(73.56px) scaleX(0.9409);transform-origin:0 0;">Line</div>
<div class="t" style="left:0;top:782px;font-size:12px;transform:translateX(100.00px) scaleX(1.0000);transform-origin:0 0;">Column</div>
<div class="t" style="left:0;top:782px;font-size:12px;transform:translateX(146.00px) scaleX(0.9750);transform-origin:0 0;">Compiler Code</div>
<div class="t" style="left:0;top:855px;font-size:12px;transform:translateX(6.08px) scaleX(0.9156);transform-origin:0 0;color:#2b579a;">Errors</div>
<div class="t" style="left:0;top:855px;font-size:12px;transform:translateX(41.00px) scaleX(1.0472);transform-origin:0 0;color:#555;">Output</div>
<div class="t" style="left:0;top:158px;font-size:12px;transform:translateX(933.11px) scaleX(0.9921);transform-origin:0 0;">Solution B...</div>
<div class="t" style="left:0;top:521px;font-size:12px;transform:translateX(933.84px) scaleX(0.9614);transform-origin:0 0;">Explorer</div>
<div class="a" style="left:930px;top:177px;width:105px;height:312px;overflow:hidden"><div class="a" style="left:-930px;top:-177px;width:1040px;height:895px">
<div class="t" style="left:0;top:180px;font-size:12px;transform:translateX(969.40px) scaleX(0.9515);transform-origin:0 0;">CreateFoldersFromHierarchy</div>
<div class="t" style="left:0;top:198px;font-size:12px;transform:translateX(987.41px) scaleX(0.9911);transform-origin:0 0;">Script Files</div>
<div class="t" style="left:0;top:216px;font-size:12px;transform:translateX(1006.45px) scaleX(0.9517);transform-origin:0 0;">SelectedEntitiesSample.vb</div>
<div class="t" style="left:0;top:234px;font-size:12px;transform:translateX(987.79px) scaleX(1.0098);transform-origin:0 0;">References</div>
</div></div>
<div class="a" style="left:930px;top:540px;width:105px;height:312px;overflow:hidden"><div class="a" style="left:-930px;top:-540px;width:1040px;height:895px">
<div class="t" style="left:0;top:543px;font-size:12px;transform:translateX(970.35px) scaleX(0.9453);transform-origin:0 0;">SelectedEntitiesSample</div>
<div class="t" style="left:0;top:561px;font-size:12px;transform:translateX(989.80px) scaleX(0.9944);transform-origin:0 0;">Vitech.Genesys.Scripting</div>
<div class="t" style="left:0;top:579px;font-size:12px;transform:translateX(1008.49px) scaleX(0.9130);transform-origin:0 0;">SelectedEntitiesSample</div>
</div></div>
</body>
</html>
